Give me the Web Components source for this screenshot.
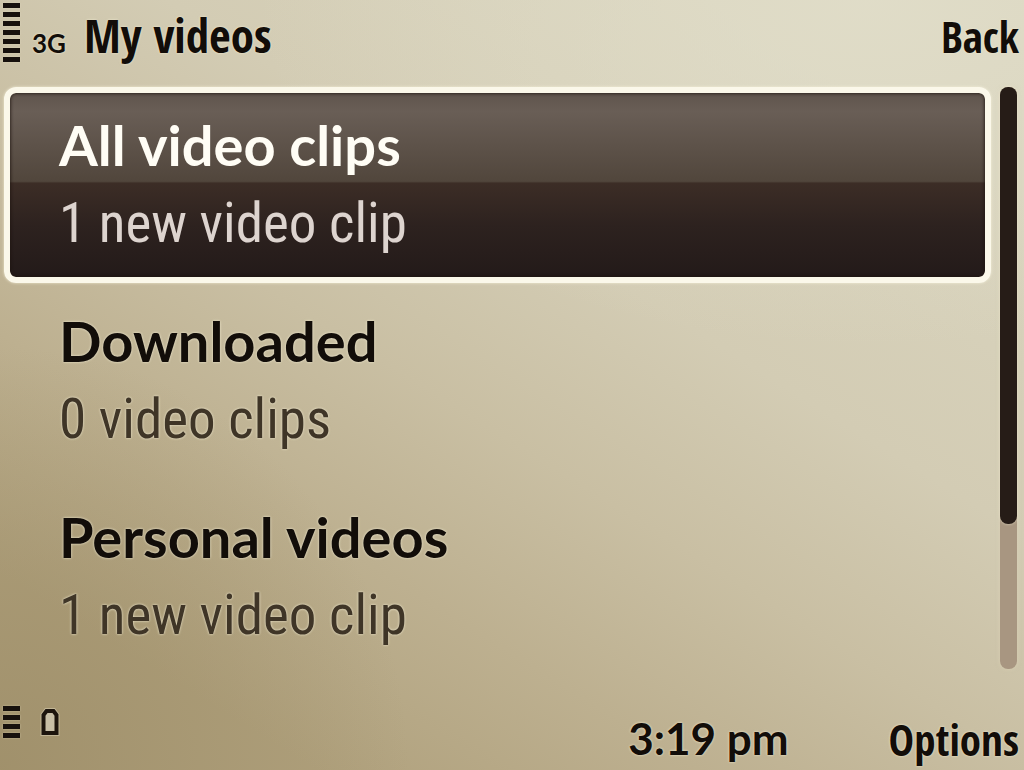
<!DOCTYPE html>
<html lang="en">
<head>
<meta charset="utf-8">
<meta name="viewport" content="width=device-width, initial-scale=1">
<title>My videos</title>
<style>
  html, body { height: 100%; margin: 0; }
  body {
    --ink: #120d09;
    --halo: 0 0 3px rgba(240, 234, 208, .7), 0 0 2px rgba(240, 234, 208, .6);
    --narrow: "Open Sans Condensed", "Roboto Condensed", "Open Sans", sans-serif;
    --light: "Roboto Condensed", "Open Sans", sans-serif;
    --wide: Lato, "Open Sans", sans-serif;
    color: var(--ink);
    font-family: var(--wide);
  }
</style>
</head>
<body>
<phone-screen>
  <status-bar slot="top">
    <level-meter slot="start" bars="7" label="Signal strength"></level-meter>
    <span slot="network">3G</span>
    <span slot="title">My videos</span>
    <soft-key slot="end">Back</soft-key>
  </status-bar>
  <clip-list>
    <clip-item selected>All video clips<span slot="detail">1 new video clip</span></clip-item>
    <clip-item>Downloaded<span slot="detail">0 video clips</span></clip-item>
    <clip-item>Personal videos<span slot="detail">1 new video clip</span></clip-item>
  </clip-list>
  <scroll-track slot="scroll"></scroll-track>
  <foot-bar slot="bottom">
    <level-meter slot="start" bars="4" label="Battery level"></level-meter>
    <battery-icon slot="start"></battery-icon>
    <time slot="clock" datetime="15:19">3:19 pm</time>
    <soft-key slot="end">Options</soft-key>
  </foot-bar>
</phone-screen>

<script>
const define = (name, html, setup) => {
  const template = document.createElement('template');
  template.innerHTML = html;
  customElements.define(name, class extends HTMLElement {
    constructor() {
      super();
      this.attachShadow({ mode: 'open' }).append(template.content.cloneNode(true));
    }
    connectedCallback() { if (setup) setup(this, this.shadowRoot); }
  });
};

define('phone-screen', `
  <style>
    :host {
      display: grid;
      grid-template: auto 1fr auto / 1fr auto;
      min-height: 100vh;
      box-sizing: border-box;
      background:
        radial-gradient(ellipse 60% 45% at 85% 0%, rgba(226, 223, 203, .75), transparent),
        radial-gradient(ellipse 40% 55% at 0% 100%, rgba(152, 136, 98, .65), transparent),
        linear-gradient(212deg, #d9d4be 14%, #d3ccb4 38%, #c9bfa3 54%, #bdb090 69%, #b0a17d 86%);
    }
    header, footer { grid-column: 1 / -1; }
    main { min-width: 0; }
  </style>
  <header><slot name="top"></slot></header>
  <main><slot></slot></main>
  <slot name="scroll"></slot>
  <footer><slot name="bottom"></slot></footer>`);

define('status-bar', `
  <style>
    :host { display: flex; align-items: baseline; height: 87px; padding: 0 5px 0 3px; box-sizing: border-box; }
    ::slotted([slot="start"]) { align-self: flex-start; margin-top: 3px; }
    ::slotted([slot="network"]) { font: 700 26px var(--wide); margin-left: 12px; text-shadow: var(--halo); }
    h1 { margin: 0 auto 0 18px; font: 600 47px/70px var(--narrow); text-shadow: var(--halo); }
  </style>
  <slot name="start"></slot><slot name="network"></slot>
  <h1><slot name="title"></slot></h1>
  <slot name="end"></slot>`);

define('soft-key', `
  <style>
    :host { display: block; }
    button { display: block; border: 0; padding: 0; background: none; color: inherit; font: 700 43px/60px var(--narrow); text-shadow: var(--halo); cursor: pointer; }
  </style>
  <button type="button"><slot></slot></button>`);

define('level-meter', `
  <style>
    :host { display: flex; flex-direction: column; gap: 4px; width: 17px; }
    i { height: 5px; background: #17110d; box-shadow: 0 0 2px rgba(235, 228, 200, .6); }
  </style>`, (host, root) => {
  host.setAttribute('role', 'img');
  host.setAttribute('aria-label', host.getAttribute('label'));
  for (let n = Number(host.getAttribute('bars')); n > 0; n--) root.append(document.createElement('i'));
});

define('battery-icon', `
  <style>:host { display: block; } svg { display: block; }</style>
  <svg width="20" height="30" viewBox="0 0 20 30" aria-hidden="true">
    <path d="M3.5 27V9L6.5 5H13.5L16.5 9V27Z" fill="#c8bfa6" stroke="#e0d8bc" stroke-opacity=".5" stroke-width="6"/>
    <path d="M3.5 27V9L6.5 5H13.5L16.5 9V27Z" fill="#c8bfa6" stroke="#1d150d" stroke-width="4"/>
  </svg>`);

define('clip-list', `
  <style>:host { display: flex; flex-direction: column; padding-left: 4px; }</style>
  <slot></slot>`);

define('clip-item', `
  <style>
    :host { display: block; }
    button {
      display: block; width: 100%; height: 196px; box-sizing: border-box;
      border: 6px solid transparent; border-radius: 12px; padding: 14px 49px;
      background: none; color: inherit; text-align: left; cursor: pointer;
      white-space: nowrap;
    }
    strong, small { display: block; }
    strong { font: 700 56px/76px var(--wide); text-shadow: var(--halo); }
    small { font: 400 55px/80px var(--light); color: #3f3527; text-shadow: var(--halo); }
    :host([selected]) button {
      border-color: #fbf8ea;
      background: linear-gradient(#5f554d, #695e56 10%, #51463c 48%, #3c2d26 49%, #2d221f 72%, #231a19) padding-box;
      box-shadow: inset 0 0 3px 1px rgba(30, 20, 15, .7), 0 0 3px rgba(250, 246, 225, .8);
    }
    :host([selected]) strong { color: #fffdf5; text-shadow: none; }
    :host([selected]) small { color: #ddd4cf; text-shadow: none; }
  </style>
  <button type="button"><strong><slot></slot></strong><small><slot name="detail"></slot></small></button>`);

define('scroll-track', `
  <style>
    :host { display: block; width: 17px; height: 582px; margin: 0 7px 0 9px; border-radius: 8px; background: #a89681; box-shadow: 0 0 4px rgba(230, 220, 190, .5); }
    div { height: 75%; border-radius: 8px; background: #261c17; box-shadow: 0 0 3px rgba(240, 234, 210, .7); }
  </style>
  <div></div>`);

define('foot-bar', `
  <style>
    :host { display: flex; align-items: flex-start; height: 70px; padding: 0 5px 0 3px; box-sizing: border-box; gap: 20px; }
    ::slotted([slot="start"]) { margin-top: 6px; }
    ::slotted([slot="clock"]) { font: 700 44px/60px var(--wide); margin: 8px 80px 0 auto; text-shadow: var(--halo); }
    ::slotted([slot="end"]) { margin-top: 10px; }
  </style>
  <slot name="start"></slot><slot name="clock"></slot><slot name="end"></slot>`);
</script>
</body>
</html>
